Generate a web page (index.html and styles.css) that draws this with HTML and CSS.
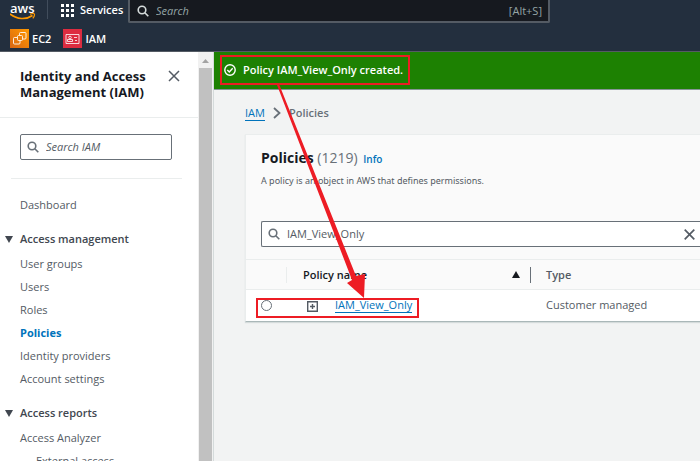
FILE: index.html
```html
<!DOCTYPE html>
<html lang="en">
<head>
<meta charset="utf-8">
<title>Policies | IAM</title>
<link rel="stylesheet" href="styles.css">
</head>
<body>
<header class="topnav">
  <div class="topnav-main">
    <a class="logo" href="#" aria-label="aws home"><span>aws</span>
      <svg width="26" height="8" viewBox="0 0 26 8"><path d="M0 1C7 6.500 16 7 22.500 2.500" fill="none" stroke="#f90" stroke-width="1.600"/><path d="M20 1.200C22.500.3 24 .5 24.400 1C24.700 2 24 4 22.800 5.400" fill="none" stroke="#f90" stroke-width="1.200"/></svg>
    </a>
    <button class="services" type="button">
      <svg width="13" height="13" viewBox="0 0 13 13" fill="#fff"><path d="M0 0h3v3H0zM5 0h3v3H5zM10 0h3v3h-3zM0 5h3v3H0zM5 5h3v3H5zM10 5h3v3h-3zM0 10h3v3H0zM5 10h3v3H5zM10 10h3v3h-3z"/></svg>
      Services
    </button>
    <label class="global-search">
      <svg width="12" height="12" viewBox="0 0 12 12" fill="none" stroke="#d5dbdb" stroke-width="1.600"><circle cx="5" cy="5" r="3.800"/><path d="M7.800 7.800L11.300 11.300"/></svg>
      <input type="search" placeholder="Search" aria-label="Search">
      <span>[Alt+S]</span>
    </label>
  </div>
  <nav class="favorites" aria-label="Favorites">
    <a href="#"><svg width="19" height="19" viewBox="0 0 19 19"><defs><linearGradient id="ec2" x1="0" y1="1" x2="1" y2="0"><stop stop-color="#d86613"/><stop offset="1" stop-color="#f90"/></linearGradient></defs><path fill="url(#ec2)" d="M0 0h19v19H0z"/><g fill="none" stroke="#fff" stroke-opacity=".85"><rect x="7.500" y="6.500" width="5" height="5" rx="1"/><path d="M9.500 6V4.500q0-1 1-1H15q1 0 1 1V9q0 1-1 1h-2M7 8.500H4.500q-1 0-1 1V14q0 1 1 1H9q1 0 1-1v-2"/></g></svg>EC2</a>
    <a href="#"><svg width="19" height="19" viewBox="0 0 19 19"><path fill="#dd2c40" d="M0 0h19v19H0z"/><g fill="none" stroke="#fff" stroke-opacity=".8"><path d="M3 5.500h13v9H3zM11 8.500h3M12 11.500h2M4.500 12.500h5v-2h-5z"/><circle cx="7" cy="8.500" r="1.300"/></g></svg>IAM</a>
  </nav>
</header>
<div class="layout">
  <aside class="sidebar">
    <div class="side-content">
      <div class="side-title">
        <h2>Identity and Access Management (IAM)</h2>
        <button class="icon-button" type="button" aria-label="Close navigation"><svg width="12" height="12" viewBox="0 0 12 12" stroke="#545b64" stroke-width="1.500"><path d="M1 1l10 10M11 1L1 11"/></svg></button>
      </div>
      <div class="side-search">
        <label class="field">
          <svg width="12" height="12" viewBox="0 0 12 12" fill="none" stroke="#687078" stroke-width="1.600"><circle cx="5" cy="5" r="3.800"/><path d="M7.800 7.800L11.300 11.300"/></svg>
          <input type="search" placeholder="Search IAM" aria-label="Search IAM">
        </label>
      </div>
      <nav class="side-nav" aria-label="IAM">
        <a href="#">Dashboard</a>
        <button class="section" type="button"><svg width="8" height="7" viewBox="0 0 8 7"><path fill="#414750" d="M0 0h8L4 7z"/></svg>Access management</button>
        <ul>
          <li><a href="#">User groups</a></li>
          <li><a href="#">Users</a></li>
          <li><a href="#">Roles</a></li>
          <li><a class="active" href="#" aria-current="page">Policies</a></li>
          <li><a href="#">Identity providers</a></li>
          <li><a href="#">Account settings</a></li>
        </ul>
        <button class="section" type="button"><svg width="8" height="7" viewBox="0 0 8 7"><path fill="#414750" d="M0 0h8L4 7z"/></svg>Access reports</button>
        <ul>
          <li><a href="#">Access Analyzer</a>
            <ul class="nested"><li><a href="#">External access</a></li></ul>
          </li>
        </ul>
      </nav>
    </div>
    <div class="scrollbar" aria-hidden="true"><svg width="13" height="16" viewBox="0 0 13 16"><path fill="#a3a3a3" d="M3 11l3.500-4 3.500 4z"/></svg><div class="thumb"></div></div>
  </aside>
  <main class="content">
    <div class="flash" role="status">
      <svg width="12" height="12" viewBox="0 0 12 12" fill="none" stroke="#fff" stroke-width="1.400"><circle cx="6" cy="6" r="5.200"/><path d="M3.300 6l2 2 3.400-3.700"/></svg>
      Policy IAM_View_Only created.
    </div>
    <nav class="breadcrumb" aria-label="Breadcrumb">
      <a href="#">IAM</a>
      <svg width="8" height="12" viewBox="0 0 8 12" fill="none" stroke="#687078" stroke-width="1.800"><path d="M1 1l5.500 5L1 11"/></svg>
      <span>Policies</span>
    </nav>
    <section class="panel">
      <div class="panel-header">
        <h1>Policies <span>(1219)</span> <a href="#">Info</a></h1>
        <p>A policy is an object in AWS that defines permissions.</p>
        <label class="field filter">
          <svg width="12" height="12" viewBox="0 0 12 12" fill="none" stroke="#687078" stroke-width="1.600"><circle cx="5" cy="5" r="3.800"/><path d="M7.800 7.800L11.300 11.300"/></svg>
          <input type="text" value="IAM_View_Only" aria-label="Filter policies">
          <button class="icon-button" type="button" aria-label="Clear filter"><svg width="11" height="11" viewBox="0 0 11 11" stroke="#545b64" stroke-width="1.700"><path d="M.7.7l9.600 9.600M10.300.7L.7 10.300"/></svg></button>
        </label>
      </div>
      <table>
        <thead>
          <tr>
            <th class="select"><div></div></th>
            <th class="name" scope="col"><div>Policy name <svg width="8" height="7" viewBox="0 0 8 7"><path fill="#16191f" d="M0 7h8L4 0z"/></svg></div></th>
            <th scope="col">Type</th>
          </tr>
        </thead>
        <tbody>
          <tr>
            <td class="select"><input type="radio" name="policy" aria-label="Select IAM_View_Only"></td>
            <td class="name"><button class="icon-button" type="button" aria-label="Expand"><svg width="11" height="11" viewBox="0 0 11 11" fill="none" stroke="#545b64"><path stroke-width="1.400" d="M.7.7h9.600v9.600H.7z"/><path stroke-width="1.400" d="M3 5.500h5M5.500 3v5"/></svg></button><a href="#">IAM_View_Only</a></td>
            <td>Customer managed</td>
          </tr>
        </tbody>
      </table>
    </section>
  </main>
</div>
<svg class="annotation" width="700" height="461" viewBox="0 0 700 461" aria-hidden="true">
  <g fill="none" stroke="#ed1c24" stroke-width="2"><path d="M221 56h188v28H221zM257 299h161v18H257z"/></g>
  <path fill="#ed1c24" d="M277 85L279 84L356 276L365 274L364 298L347 283L352 280Z"/>
</svg>
</body>
</html>
```
FILE: styles.css
```css
* { box-sizing: border-box; }
body {
  margin: 0;
  height: 100vh;
  display: flex;
  flex-direction: column;
  overflow: hidden;
  font: 11px/16px "Open Sans", "Noto Sans", sans-serif;
  color: #545b64;
}
svg { flex: none; display: block; }
a { color: inherit; text-decoration: none; }
button, input { font: inherit; color: inherit; }
button { background: none; border: 0; padding: 0; }
input { min-width: 0; border: 0; padding: 0; background: none; outline: 0; }
ul { list-style: none; margin: 0; padding: 0; }
h1, h2, p { margin: 0; }

.topnav {
  flex: none;
  background: #232f3e;
  border-bottom: 1px solid #545b64;
  color: #fff;
}
.topnav-main { display: flex; height: 23px; }
.logo {
  width: 48px;
  padding-left: 10px;
  border-right: 1px solid #414d5c;
  margin-bottom: 4px;
  font: 600 13px/16px "Open Sans", sans-serif;
}
.logo span { display: block; height: 13px; }
.services {
  width: 80px;
  display: flex;
  align-items: center;
  gap: 6px;
  padding: 0 0 3px 13px;
  font-weight: 600;
}
.global-search {
  width: 422px;
  display: flex;
  align-items: center;
  gap: 7px;
  padding: 0 6px 0 7px;
  background: #16191f;
  border: 2px solid #545b64;
  border-top: 0;
  border-radius: 0 0 2px 2px;
  color: #95a5a6;
}
.global-search input { flex: 1; }
::placeholder { color: inherit; font-style: italic; opacity: 1; }
.favorites { display: flex; gap: 12px; height: 28px; padding: 6px 10px 3px; font-weight: 600; }
.favorites a { display: flex; align-items: center; gap: 3px; }

.layout { flex: 1; min-height: 0; display: flex; }
.sidebar {
  flex: none;
  width: 214px;
  display: flex;
  overflow: hidden;
  border-right: 1px solid #d5dbdb;
}
.side-content { flex: 1; min-width: 0; }
.side-title {
  display: flex;
  justify-content: space-between;
  align-items: flex-start;
  height: 66px;
  padding: 16px 18px 0 20px;
  border-bottom: 1px solid #eaeded;
}
h2 { font-size: 13px; line-height: 16px; color: #16191f; }
.side-title .icon-button { margin-top: 2px; }
.side-search { margin: 0 16px 0 11px; padding: 16px 10px 18px 9px; border-bottom: 1px solid #eaeded; }
.field {
  display: flex;
  align-items: center;
  gap: 7px;
  height: 26px;
  padding: 0 6px;
  background: #fff;
  border: 1px solid #687078;
  border-radius: 2px;
}
.field input { flex: 1; }
.side-nav { padding-top: 14px; }
.side-nav a { display: block; padding-left: 20px; line-height: 23px; }
.side-nav .nested a { padding-left: 36px; }
.side-nav .active { color: #0073bb; font-weight: 700; }
.section {
  display: flex;
  align-items: center;
  gap: 7px;
  margin: 12px 0 2px;
  padding-left: 5px;
  line-height: 16px;
  height: 22px;
  font-weight: 600;
  color: #414750;
}
.scrollbar { width: 15px; display: flex; flex-direction: column; align-items: center; background: #f1f1f1; }
.thumb { flex: 1; width: 13px; background: #c1c1c1; }

.content { flex: 1; min-width: 0; background: #f2f3f3; }
.flash {
  display: flex;
  align-items: center;
  gap: 7px;
  height: 38px;
  padding: 0 10px 2px;
  background: #1d8102;
  border-bottom: 1px solid #879596;
  color: #fff;
  font-weight: 600;
}
.breadcrumb { display: flex; align-items: center; gap: 8px; padding: 15px 31px 13px; font-weight: 600; color: #687078; }
.breadcrumb a, td a { color: #0073bb; font-weight: 400; border-bottom: 1px solid; line-height: 14px; }
.panel {
  margin-left: 31px;
  background: #fff;
  border: 1px solid #eaeded;
  border-right: 0;
  border-bottom-color: #aab7b8;
  box-shadow: 0 1px 1px #d5dbdb;
}
.panel-header { padding: 13px 0 12px 15px; background: #fafafa; }
h1 { font-size: 14px; line-height: 20px; color: #16191f; }
h1 span { color: #687078; font-weight: 400; }
h1 a { margin-left: 2px; font-size: 10px; font-weight: 600; color: #0073bb; }
.panel-header p { margin: 4px 0 32px; font: 9px/16px "Noto Sans", sans-serif; }
.filter { border-right: 0; border-radius: 2px 0 0 2px; padding-right: 5px; }
table { width: 100%; border-collapse: collapse; table-layout: fixed; }
th { height: 30px; padding: 0; text-align: left; font-weight: 600; background: #fafafa; border: solid #eaeded; border-width: 1px 0; }
th div { display: flex; align-items: center; justify-content: space-between; height: 16px; padding-right: 10px; border-right: 1px solid #687078; }
th.select div { border-color: #eaeded; }
td { height: 31px; padding: 0; }
.select { width: 41px; }
.name { width: 244px; }
.name + * { padding-left: 15px; }
th.name { padding-left: 16px; color: #16191f; }
td.name { padding-left: 20px; }
td.name .icon-button { margin-right: 17px; vertical-align: middle; }
td.select { padding-left: 15px; }
input[type="radio"] { appearance: none; display: block; width: 11px; height: 11px; margin: 0; border: 1px solid #687078; border-radius: 50%; background: #fff; }

.annotation { position: absolute; top: 0; left: 0; pointer-events: none; }
```
